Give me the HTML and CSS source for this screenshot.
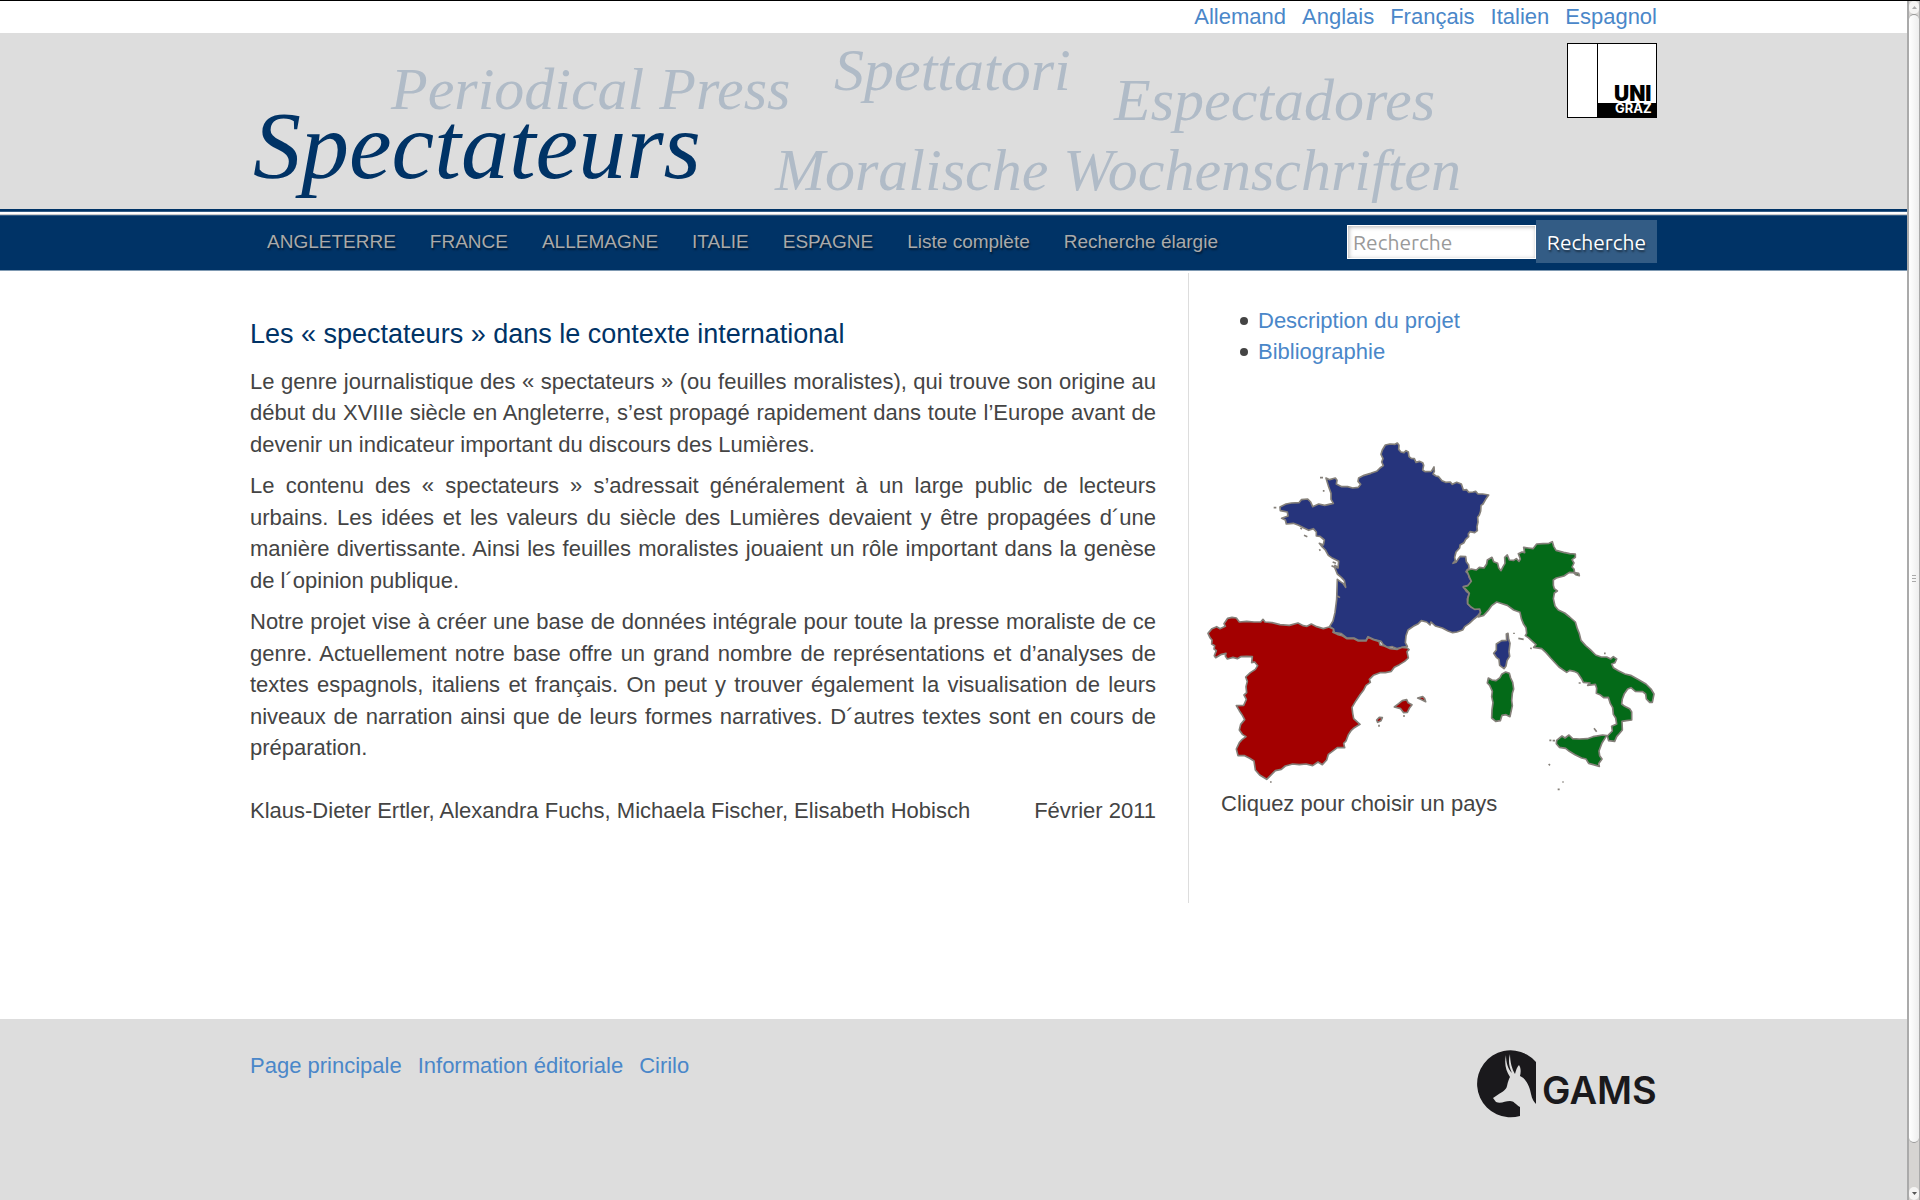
FILE: index.html
```html
<!DOCTYPE html>
<html lang="fr">
<head>
<meta charset="utf-8">
<title>Spectateurs</title>
<link rel="stylesheet" href="styles.css">
</head>
<body>
<div class="page">
  <nav class="languages container" aria-label="Langues">
    <a href="#de">Allemand</a>
    <a href="#en">Anglais</a>
    <a href="#fr">Français</a>
    <a href="#it">Italien</a>
    <a href="#es">Espagnol</a>
  </nav>

  <header class="banner">
    <div class="banner-inner container">
      <svg class="wordmark" viewBox="0 0 1000 176" role="img" aria-label="Spectateurs">
        <g class="wordmark-soft">
          <text x="141" y="76">Periodical Press</text>
          <text x="584" y="57">Spettatori</text>
          <text x="864" y="87">Espectadores</text>
          <text x="525" y="157">Moralische Wochenschriften</text>
        </g>
        <text class="wordmark-main" x="3" y="145">Spectateurs</text>
      </svg>
      <svg class="uni-logo" viewBox="0 0 90 75" role="img" aria-label="Uni Graz">
        <rect width="90" height="75" fill="#000"/>
        <rect x="1" y="1" width="29" height="73" fill="#fff"/>
        <rect x="31" y="1" width="58" height="59" fill="#fff"/>
        <text class="uni" x="47" y="58">UNI</text>
        <text class="graz" x="48" y="70">GRAZ</text>
      </svg>
    </div>
  </header>

  <div class="menubar">
    <div class="menubar-inner container">
      <nav class="menu" aria-label="Menu principal">
        <a href="#angleterre">ANGLETERRE</a>
        <a href="#france">FRANCE</a>
        <a href="#allemagne">ALLEMAGNE</a>
        <a href="#italie">ITALIE</a>
        <a href="#espagne">ESPAGNE</a>
        <a href="#liste">Liste complète</a>
        <a href="#recherche">Recherche élargie</a>
      </nav>
      <form class="search" role="search">
        <input type="text" placeholder="Recherche" aria-label="Recherche">
        <button type="button">Recherche</button>
      </form>
    </div>
  </div>

  <div class="content container">
    <main class="article">
      <h1>Les « spectateurs » dans le contexte international</h1>
      <p>Le genre journalistique des « spectateurs » (ou feuilles moralistes), qui trouve son origine au début du XVIIIe siècle en Angleterre, s’est propagé rapidement dans toute l’Europe avant de devenir un indicateur important du discours des Lumières.</p>
      <p>Le contenu des « spectateurs » s’adressait généralement à un large public de lecteurs urbains. Les idées et les valeurs du siècle des Lumières devaient y être propagées d´une manière divertissante. Ainsi les feuilles moralistes jouaient un rôle important dans la genèse de l´opinion publique.</p>
      <p>Notre projet vise à créer une base de données intégrale pour toute la presse moraliste de ce genre. Actuellement notre base offre un grand nombre de représentations et d’analyses de textes espagnols, italiens et français. On peut y trouver également la visualisation de leurs niveaux de narration ainsi que de leurs formes narratives. D´autres textes sont en cours de préparation.</p>
      <div class="byline">
        <span>Klaus-Dieter Ertler, Alexandra Fuchs, Michaela Fischer, Elisabeth Hobisch</span>
        <span>Février 2011</span>
      </div>
    </main>
    <aside class="sidebar">
      <ul>
        <li><a href="#description">Description du projet</a></li>
        <li><a href="#bibliographie">Bibliographie</a></li>
      </ul>
      <svg class="map" viewBox="15 18 1356 1056" role="group" aria-label="Carte">
        <a href="#map-france" aria-label="France">
          <g class="land france">
            <path d="M547 60 556 45 570 42 585 43 592 39 597 46 596 58 603 66 612 68 618 62 625 66 627 80 634 85 643 86 648 97 658 94 668 98 671 106 668 120 675 125 694 124 702 111 703 124 699 132 708 138 716 140 726 152 737 157 751 156 757 163 770 157 784 162 790 180 800 179 806 187 819 186 827 184 834 192 848 192 866 195 857 208 849 222 843 226 842 243 838 255 833 262 834 276 831 290 832 302 824 308 810 305 805 312 806 320 797 328 792 338 780 345 779 354 768 366 764 382 766 392 759 400 768 397 776 385 781 379 797 380 799 395 806 405 807 414 798 425 805 432 808 443 815 453 809 465 790 470 799 484 808 491 802 507 803 521 812 530 826 537 839 538 842 546 833 558 820 569 808 580 794 590 788 600 771 606 758 608 744 603 727 594 706 588 693 576 690 585 680 576 664 572 655 581 640 589 624 600 618 617 616 638 622 649 607 652 592 656 577 650 562 652 549 643 543 634 520 628 504 620 498 631 475 631 462 624 440 624 424 611 404 608 399 597 389 589 399 573 405 548 410 508 412 448 421 455 429 460 437 472 433 452 424 442 412 432 404 412 396 408 414 414 416 394 398 385 385 376 376 360 366 350 358 340 370 345 373 330 360 319 349 318 349 306 340 296 326 301 312 294 296 286 280 280 259 282 256 270 245 265 264 258 262 246 241 242 240 231 258 222 274 219 297 218 304 209 323 207 332 216 338 230 356 222 374 226 400 220 393 208 393 190 386 170 378 144 389 149 406 144 411 151 409 162 425 170 443 170 458 174 475 172 482 163 474 154 476 144 492 136 512 130 530 124 540 114 550 107 545 96 549 86 543 73Z"/>
            <path d="M924 610 926 628 930 640 927 665 929 679 921 692 918 708 912 716 899 706 897 688 889 682 881 670 889 660 889 642 905 632 920 631 919 612Z"/>
            <path d="M360 143h9M371 180v5M221 233h8M301 294l5 3M312 316l10 4M358 358l3 4M398 396l10 4M403 405l12 8M412 498l8 5"/>
          </g>
        </a>
        <a href="#map-italie" aria-label="Italie">
          <g class="land italie" transform="translate(600 270)">
            <path d="M200 151 214 147 229 150 238 142 252 144 260 132 262 120 276 112 281 125 293 130 296 143 303 152 309 140 315 130 314 112 322 105 328 120 341 121 349 116 357 124 361 117 355 101 366 96 374 98 371 82 385 84 399 86 410 72 429 71 447 70 457 65 461 79 468 91 491 97 509 101 526 102 526 112 516 119 522 129 516 141 522 147 524 158 536 160 538 167 529 165 520 158 508 157 492 168 469 174 460 180 460 196 463 206 472 213 463 219 460 236 465 258 475 270 494 279 509 291 526 306 532 326 538 341 543 361 557 377 571 389 587 405 604 411 620 411 632 417 640 410 650 417 645 428 635 432 640 443 655 452 675 462 692 466 716 479 738 492 753 507 762 522 757 547 749 547 739 537 737 522 728 515 706 514 693 503 683 507 673 521 667 537 665 552 674 559 689 566 695 576 695 600 679 602 666 604 667 630 657 642 650 650 644 664 626 662 622 648 637 633 635 619 650 612 647 594 640 583 638 563 631 551 625 532 611 533 600 524 589 520 590 505 586 493 563 496 570 489 550 487 545 477 533 459 522 454 509 451 500 457 477 441 463 426 452 414 438 398 425 386 401 382 408 374 385 353 376 347 380 340 378 323 370 311 364 296 360 277 341 270 322 256 300 249 290 246 276 256 264 272 251 286 235 291 242 278 239 267 224 268 213 261 203 251 204 233 208 220 199 209 190 202 203 197 214 184 209 173 205 163Z"/>
            <path d="M265 474 276 480 288 482 300 473 305 463 317 456 328 460 332 474 338 487 341 507 337 520 335 542 337 557 330 590 318 584 306 586 301 602 287 604 275 594 276 569 279 548 275 530 277 514 269 496 262 489Z"/>
            <path d="M470 661 486 648 495 654 507 645 518 656 538 657 562 656 579 650 608 645 620 647 606 669 597 693 599 707 606 717 596 731 598 739 580 734 566 730 558 717 545 714 525 704 508 694 497 685 478 682 469 671Z"/>
            <path d="M342 338v4M355 355l16 3M391 384l4 2M612 400h5M536 489h6M582 625l8 10M448 661h6M458 662h7M446 732l4 4M487 786h4M473 808h6"/>
          </g>
        </a>
        <a href="#map-espagne" aria-label="Espagne">
          <g class="land espagne" transform="translate(0 510)">
            <path d="M24 100 36 86 50 80 60 86 76 79 72 71 83 55 96 52 109 54 118 66 140 64 162 66 182 66 189 58 195 66 216 68 240 74 268 76 294 69 310 77 321 79 334 72 350 80 370 86 387 81 401 88 399 97 412 103 426 107 440 116 462 116 475 123 498 123 504 112 520 119 537 124 540 135 553 138 571 146 592 148 607 142 622 144 627 149 621 155 625 174 614 184 598 194 583 202 574 214 556 218 540 218 520 226 508 238 511 247 498 256 491 270 480 284 468 302 456 322 458 340 461 356 480 373 463 383 454 391 445 404 438 423 431 430 434 443 412 443 397 454 385 463 380 480 367 494 354 486 338 497 318 492 298 494 278 492 256 498 244 508 226 512 212 526 200 538 179 525 166 510 162 483 149 475 134 467 114 467 109 447 118 428 126 419 138 410 127 403 118 390 122 373 134 359 126 344 118 332 109 317 131 316 139 298 132 285 140 278 138 260 142 244 137 231 151 218 166 208 173 197 164 186 155 188 157 170 140 169 122 170 112 176 99 172 82 177 76 168 78 160 62 164 47 173 43 167 49 152 42 147 44 137 35 132 36 120 30 113Z"/>
            <path d="M583 321 596 311 607 302 620 299 624 308 636 314 628 325 622 337 611 338 602 326Z"/>
            <path d="M653 294 668 290 674 296 677 305 665 299Z"/>
            <path d="M530 360 538 352 547 353 543 362 533 367Z"/>
            <path d="M537 374v6M609 348h6M210 546h5"/>
          </g>
        </a>
      </svg>
      <p class="caption">Cliquez pour choisir un pays</p>
    </aside>
  </div>

  <footer class="footer">
    <div class="footer-inner container">
      <nav class="footer-links" aria-label="Pied de page">
        <a href="#accueil">Page principale</a>
        <a href="#information">Information éditoriale</a>
        <a href="#cirilo">Cirilo</a>
      </nav>
      <svg class="gams-logo" viewBox="0 0 180 67" role="img" aria-label="GAMS">
        <path fill="#1a191c" d="M59 12A33.500 33.500 0 1 0 43 66L43 57C38 54 37 51 33 51C28 51 24 54 19 52L16 48L19 46C24 42 29 41 30 36C31 31 32 29 33 27C29 21 27 14 29 5C29 13 31 19 35 23C32 17 31 11 33 4C33 12 35 19 38 24C39 20 40 17 42 15C44 18 44 22 43 26C50 29 53 38 54 44C55 49 57 52 59 54Z"/>
        <text x="65" y="54">GAMS</text>
      </svg>
    </div>
  </footer>
</div>
<div class="scrollbar" aria-hidden="true">
  <div class="arrow"><svg viewBox="0 0 5 3"><path d="M0 3h5L2.500 0z" fill="#aaa"/></svg></div>
  <div class="thumb"><i></i><i></i><i></i></div>
  <div class="track"></div>
  <div class="arrow"><svg viewBox="0 0 5 3"><path d="M0 0h5L2.500 3z" fill="#555"/></svg></div>
</div>
</body>
</html>
```
FILE: styles.css
```css
* {
  box-sizing: border-box;
}

body {
  margin: 0;
  min-height: 100vh;
  border-top: 1px solid #000;
  display: grid;
  grid-template-columns: minmax(0, 1fr) 13px;
  background: #fff;
  color: #444;
  font-family: "Liberation Sans", Arial, sans-serif;
  font-size: 22px;
  line-height: 1.43;
}

a {
  color: #4a87c9;
  text-decoration: none;
}

.page {
  display: flex;
  flex-direction: column;
}

.container {
  width: 100%;
  max-width: 1407px;
  margin: 0 auto;
}

.languages {
  display: flex;
  justify-content: flex-end;
  gap: 16px;
  height: 32px;
}

/* Banner */
.banner {
  background: #ddd;
}

.banner-inner {
  display: flex;
  justify-content: space-between;
  height: 176px;
}

.wordmark {
  width: 1000px;
  height: 176px;
  overflow: visible;
  font-family: "Liberation Serif", "Times New Roman", serif;
  font-style: italic;
}

.wordmark-soft {
  font-size: 60px;
  fill: #b0bbc7;
}

.wordmark-main {
  font-size: 96px;
  fill: #003366;
}

.uni-logo {
  width: 90px;
  height: 75px;
  margin-top: 10px;
  font-family: Inter, sans-serif;
}

.uni {
  font-size: 21px;
  font-weight: 900;
  fill: #000;
}

.graz {
  font-size: 13px;
  font-weight: 700;
  fill: #fff;
}

/* Menu bar */
.menubar {
  margin-top: 7px;
  background: #003366;
  border-bottom: 1px solid #7f99b2;
  position: relative;
}

.menubar::before {
  content: "";
  position: absolute;
  left: 0;
  right: 0;
  top: -7px;
  height: 7px;
  background: linear-gradient(#003366 2px, #335c85 2px 3px, #fff 3px 5px, #ccc 5px 6px, #335c85 6px);
}

.menubar-inner {
  display: flex;
  justify-content: space-between;
  align-items: center;
  height: 54px;
  padding-bottom: 3px;
}

.menu {
  display: flex;
  font-size: 19px;
}

.menu a {
  padding: 0 17px;
  color: #aaa;
  text-shadow: 1px 2px 2px rgba(0, 0, 0, 0.5);
}

.search {
  display: flex;
  align-items: center;
}

.search input,
.search button {
  border: 0;
  border-radius: 0;
  font-family: Ubuntu, "Noto Sans", sans-serif;
  font-size: 21px;
}

.search input {
  width: 189px;
  height: 34px;
  padding: 0 5px;
  border: 1px solid #fff;
  background: #fff;
  box-shadow: inset 1px 1px 4px rgba(0, 0, 0, 0.3);
}

.search input::placeholder {
  color: #999;
}

.search button {
  width: 121px;
  height: 43px;
  padding: 0;
  background: #335c85;
  color: #fff;
  text-shadow: 1px 2px 2px rgba(0, 0, 0, 0.5);
}

/* Content */
.content {
  display: grid;
  grid-template-columns: minmax(0, 2fr) minmax(0, 1fr);
  min-height: 630px;
  margin-top: 2px;
  margin-bottom: 116px;
}

.article {
  padding: 45px 32px 0 0;
}

.article h1 {
  margin: 0 0 16px;
  color: #003366;
  font-size: 27px;
  font-weight: 400;
  line-height: 32px;
}

.article p {
  margin: 0 0 10px;
  text-align: justify;
}

.byline {
  display: flex;
  justify-content: space-between;
  margin-top: 32px;
}

.sidebar {
  padding: 32px 0 0 16px;
  border-left: 1px solid #ddd;
}

.sidebar ul {
  margin: 0 0 68px;
  padding-left: 35px;
  list-style: none;
}

.sidebar li {
  display: flex;
  align-items: center;
  gap: 10px;
}

.sidebar li::before {
  content: "";
  width: 8px;
  height: 8px;
  border-radius: 50%;
  background: #444;
}

.map {
  display: block;
  width: 100%;
  overflow: visible;
}

.land path {
  stroke: #85807a;
  stroke-width: 5;
  stroke-linejoin: round;
}

.france {
  fill: #26347c;
}

.italie {
  fill: #046a18;
}

.espagne {
  fill: #a30000;
}

.caption {
  margin: 0;
  padding-left: 16px;
}

/* Footer */
.footer {
  flex: 1;
  background: #ddd;
}

.footer-inner {
  display: flex;
  justify-content: space-between;
  padding-top: 31px;
}

.footer-links {
  display: flex;
  gap: 16px;
}

.gams-logo {
  width: 180px;
  height: 67px;
  overflow: visible;
  font-family: Inter, sans-serif;
  font-size: 38px;
  font-weight: 600;
  fill: #1a191c;
}

/* Scroll bar */
.scrollbar {
  display: flex;
  flex-direction: column;
  border: 1px solid #aaa;
  border-width: 0 1px 0 2px;
  background: #d6d4d2;
}

.arrow {
  display: flex;
  align-items: center;
  justify-content: center;
  height: 13px;
  border-radius: 5px;
  background: #f5f4f3;
}

.arrow svg {
  width: 5px;
  height: 3px;
}

.thumb {
  flex: 1;
  display: flex;
  flex-direction: column;
  align-items: center;
  justify-content: center;
  gap: 2px;
  border: 1px solid #999;
  border-width: 1px 0;
  border-radius: 5px;
  background: linear-gradient(90deg, #fff, #eee);
}

.thumb i {
  width: 4px;
  height: 1px;
  background: #aaa;
}

.track {
  height: 44px;
}
```
